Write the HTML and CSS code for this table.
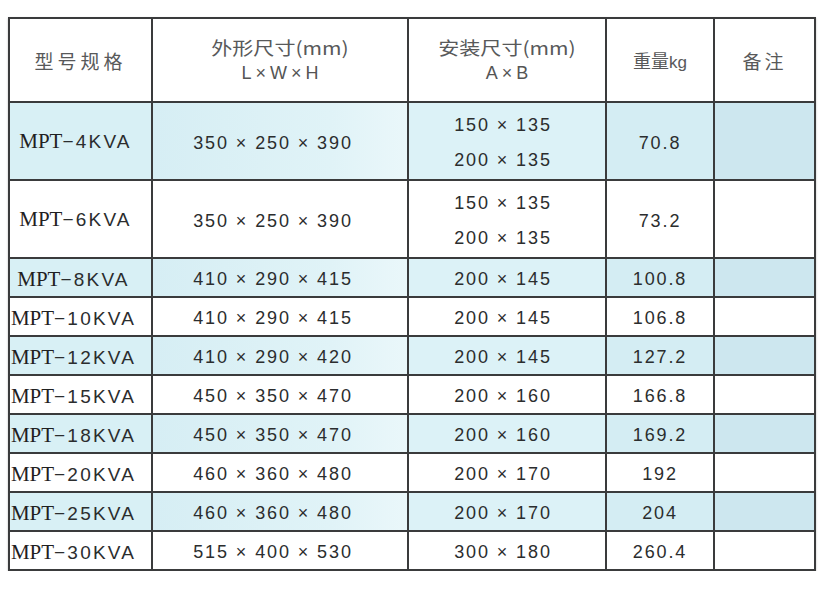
FILE: index.html
```html
<!DOCTYPE html>
<html lang="zh">
<head>
<meta charset="utf-8">
<link rel="stylesheet" href="styles.css">
</head>
<body>
<table class="spec">
  <colgroup>
    <col class="c-model"><col class="c-dim"><col class="c-mount"><col class="c-wt"><col class="c-note">
  </colgroup>
  <thead>
    <tr class="head">
      <th class="h-model">型号规格</th>
      <th><div class="cn">外形尺寸(mm)</div><div class="en">L×W×H</div></th>
      <th><div class="cn">安装尺寸(mm)</div><div class="en">A×B</div></th>
      <th class="h-wt">重量<span class="kg">kg</span></th>
      <th class="h-note">备注</th>
    </tr>
  </thead>
  <tbody>
    <tr class="tall shade">
      <td class="model first"><span class="mpt">MPT</span>−4KVA</td>
      <td class="dim">350 × 250 × 390</td>
      <td class="mount"><div>150 × 135</div><div>200 × 135</div></td>
      <td class="wt">70.8</td>
      <td class="note"></td>
    </tr>
    <tr class="tall">
      <td class="model first"><span class="mpt">MPT</span>−6KVA</td>
      <td class="dim">350 × 250 × 390</td>
      <td class="mount"><div>150 × 135</div><div>200 × 135</div></td>
      <td class="wt">73.2</td>
      <td class="note"></td>
    </tr>
    <tr class="shade">
      <td class="model"><span class="mpt">MPT</span>−8KVA</td>
      <td class="dim">410 × 290 × 415</td>
      <td class="mount">200 × 145</td>
      <td class="wt">100.8</td>
      <td class="note"></td>
    </tr>
    <tr>
      <td class="model"><span class="mpt">MPT</span>−10KVA</td>
      <td class="dim">410 × 290 × 415</td>
      <td class="mount">200 × 145</td>
      <td class="wt">106.8</td>
      <td class="note"></td>
    </tr>
    <tr class="shade">
      <td class="model"><span class="mpt">MPT</span>−12KVA</td>
      <td class="dim">410 × 290 × 420</td>
      <td class="mount">200 × 145</td>
      <td class="wt">127.2</td>
      <td class="note"></td>
    </tr>
    <tr>
      <td class="model"><span class="mpt">MPT</span>−15KVA</td>
      <td class="dim">450 × 350 × 470</td>
      <td class="mount">200 × 160</td>
      <td class="wt">166.8</td>
      <td class="note"></td>
    </tr>
    <tr class="shade">
      <td class="model"><span class="mpt">MPT</span>−18KVA</td>
      <td class="dim">450 × 350 × 470</td>
      <td class="mount">200 × 160</td>
      <td class="wt">169.2</td>
      <td class="note"></td>
    </tr>
    <tr>
      <td class="model"><span class="mpt">MPT</span>−20KVA</td>
      <td class="dim">460 × 360 × 480</td>
      <td class="mount">200 × 170</td>
      <td class="wt">192</td>
      <td class="note"></td>
    </tr>
    <tr class="shade">
      <td class="model"><span class="mpt">MPT</span>−25KVA</td>
      <td class="dim">460 × 360 × 480</td>
      <td class="mount">200 × 170</td>
      <td class="wt">204</td>
      <td class="note"></td>
    </tr>
    <tr>
      <td class="model"><span class="mpt">MPT</span>−30KVA</td>
      <td class="dim">515 × 400 × 530</td>
      <td class="mount">300 × 180</td>
      <td class="wt">260.4</td>
      <td class="note"></td>
    </tr>
  </tbody>
</table>
</body>
</html>
```

FILE: styles.css
```css
html, body {
  margin: 0;
  padding: 0;
  background: #ffffff;
}

body {
  padding: 17px 0 0 8px;
  font-family: "Liberation Sans", Arial, "Noto Sans CJK SC", sans-serif;
  color: #2b2d2e;
}

.spec {
  border-collapse: collapse;
  table-layout: fixed;
  width: 806px;
  box-shadow: 0 1px 2px rgba(0, 0, 0, 0.25);
}

.c-model { width: 143px; }
.c-dim { width: 256px; }
.c-mount { width: 198px; }
.c-wt { width: 108px; }
.c-note { width: 101px; }

.spec th,
.spec td {
  border: 2px solid #3a3b3c;
  padding: 0;
  text-align: center;
  vertical-align: middle;
}

.spec th {
  font-weight: normal;
  color: #58595a;
  font-family: "Noto Sans CJK SC", "Liberation Sans", sans-serif;
}

.head {
  height: 84px;
}

.cn {
  font-size: 18px;
  line-height: 26px;
  letter-spacing: 0;
  transform: scaleX(1.17);
}

.en {
  font-family: "Liberation Sans", Arial, sans-serif;
  font-size: 18px;
  line-height: 26px;
  letter-spacing: 4px;
  color: #555;
  padding-left: 4px;
}

.h-model {
  font-size: 19px;
  letter-spacing: 4px;
  padding-top: 4px;
}

.h-wt {
  font-size: 18px;
  letter-spacing: 0;
  padding-top: 4px;
}

.kg {
  font-family: "Liberation Sans", Arial, sans-serif;
  font-size: 17px;
}

.h-note {
  font-size: 19px;
  letter-spacing: 3px;
  padding-top: 4px;
}

.spec tbody tr {
  height: 39px;
}

.spec tbody tr.tall {
  height: 78px;
}

.spec td {
  font-size: 18px;
  letter-spacing: 1.9px;
  line-height: 33px;
  padding-top: 3px;
}

.spec td.model {
  font-size: 19px;
  letter-spacing: 2.2px;
  padding-right: 14px;
  white-space: nowrap;
}

.spec td.model.first {
  padding-left: 4px;
}

.mpt {
  font-family: "Liberation Serif", "Times New Roman", serif;
  font-size: 21px;
  letter-spacing: 0;
  color: #1f2021;
}

.spec td.dim {
  padding-right: 14px;
}

.spec td.mount {
  padding-right: 8px;
}

.spec tr.tall td.mount {
  line-height: 35px;
  padding-top: 4px;
}

.spec tr.tall td.dim,
.spec tr.tall td.wt {
  padding-top: 5px;
}

.spec tr.tall td.model {
  padding-top: 1px;
}

.shade td {
  background: #d8f0f5;
}

.shade td.dim {
  background: linear-gradient(to right, #d6eef4 0%, #e0f3f7 70%, #eaf7fa 100%);
}

.shade td.mount {
  background: #dcf2f7;
}

.shade td.wt {
  background: #d4edf3;
}

.shade td.note {
  background: #cde7ef;
}
```
